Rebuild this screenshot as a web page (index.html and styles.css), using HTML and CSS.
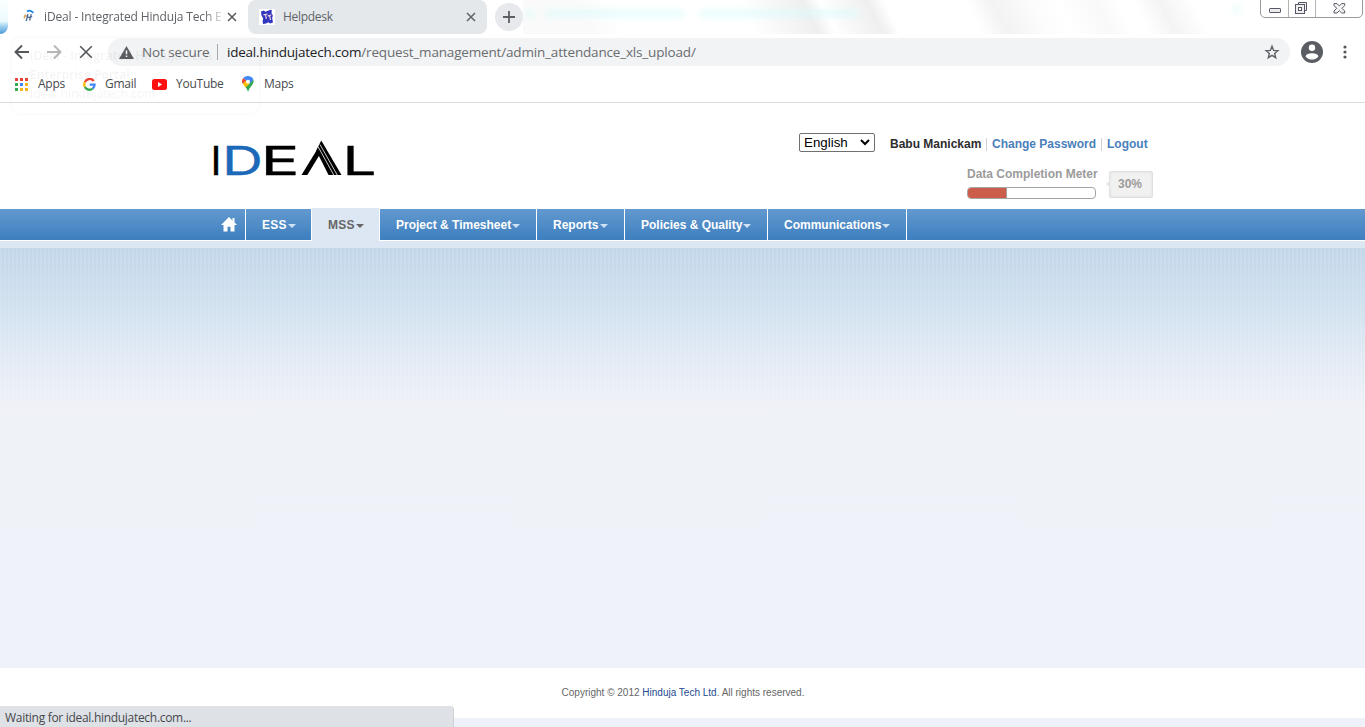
FILE: index.html
```html
<!DOCTYPE html>
<html lang="en">
<head>
<meta charset="utf-8">
<title>iDeal - Integrated Hinduja Tech Enterprise Portal</title>
<link rel="stylesheet" href="styles.css">
</head>
<body>
<div class="browser">
  <div class="tabstrip">
    <div class="desktop-edge"></div>
    <div class="tab active">
      <svg class="fav" width="16" height="16" viewBox="0 0 16 16"><path d="M6 2.500Q9.500.2 12.300 4" fill="none" stroke="#1683e8" stroke-width="1.700"/><path d="M4.600 5.500 3 9.500M2.800 7h3" stroke="#d8a35f" stroke-width="1.300" fill="none"/><path d="M7 5 5.200 12.200M10.300 5.200 8.600 11.500M6.200 8.700l5-1" stroke="#4c6a92" stroke-width="1.300" fill="none"/></svg>
      <span class="tab-title first">iDeal - Integrated Hinduja Tech E</span>
      <svg class="x" width="10" height="10" viewBox="0 0 10 10"><path d="m1 1 8 8M9 1 1 9" stroke="#55595d" stroke-width="1.500"/></svg>
    </div>
    <div class="tab idle">
      <svg class="fav" width="16" height="16" viewBox="0 0 16 16"><path fill="#fff" d="M0 0h16v16H0z"/><path fill="#3235bd" d="m2 2.500 3-1 1.200 1.200L9 1.800l2.500-1 1.300.5-.3 3 1.300 2-.6 3 .8 4.200-3 1-1.600-1.300-2.400 1.300-3 .5L3.600 12l.6-2.500L2.500 6.500z"/><path d="m4.500 5.900 4-.9M6.500 5.500l.9 4.300M8.800 6.800l3.500-.8M10.600 6.500l.9 4.500" stroke="#f2d5dc" stroke-width="1.200"/></svg>
      <span class="tab-title">Helpdesk</span>
      <svg class="x" width="10" height="10" viewBox="0 0 10 10"><path d="m1 1 8 8M9 1 1 9" stroke="#5f6368" stroke-width="1.500"/></svg>
    </div>
    <div class="newtab"><svg width="12" height="12" viewBox="0 0 12 12"><path d="M6 0v12M0 6h12" stroke="#5b5f63" stroke-width="1.800"/></svg></div>
    <div class="glass"><i class="glow g1"></i><i class="glow g2"></i><i class="glow g3"></i><i class="glow g4"></i></div>
    <div class="winbtns">
      <span class="wb w1"><svg width="13" height="6" viewBox="0 0 13 6"><rect x=".5" y=".5" width="11" height="4" rx=".6" fill="#ececec" stroke="#555766"/></svg></span>
      <span class="wb w2"><svg width="13" height="13" viewBox="0 0 13 13"><path d="M3.500 3V.5h8v8H9" fill="#eee" stroke="#555766"/><rect x=".5" y="2.500" width="9" height="9" fill="#eee" stroke="#555766"/><rect x="3.500" y="5.500" width="3" height="3" fill="#fff" stroke="#555766"/></svg></span>
      <span class="wb w3"><svg width="13" height="11" viewBox="0 0 13 11"><path d="M1 .6h3l2.300 2.300L8.700.6h3v2L9 5.300l2.700 2.700v2h-3L6.300 7.700 4 10H1V8l2.700-2.700L1 2.600z" fill="#f3f3f3" stroke="#555766"/></svg></span>
    </div>
  </div>

  <div class="toolbar">
    <svg class="ic back" width="16" height="16" viewBox="0 0 16 16"><path d="M15 8H2M8 1.500 1.500 8 8 14.500" fill="none" stroke="#54585c" stroke-width="1.900"/></svg>
    <svg class="ic fwd" width="16" height="16" viewBox="0 0 16 16"><path d="M1 8h13M8 1.500 14.500 8 8 14.500" fill="none" stroke="#b6b8ba" stroke-width="1.900"/></svg>
    <svg class="ic stop" width="14" height="14" viewBox="0 0 14 14"><path d="m1.200 1.200 11.600 11.600M12.800 1.200 1.200 12.800" stroke="#54585c" stroke-width="1.600"/></svg>
    <div class="omnibox">
      <svg class="warn" width="15" height="13" viewBox="0 0 15 13"><path d="M7.500 0 15 13H0z" fill="#5a5d61"/><path d="M7.500 4.500v3.700M7.500 9.500v1.600" stroke="#fff" stroke-width="1.500"/></svg>
      <span class="notsecure">Not secure</span>
      <span class="bar"></span>
      <span class="url"><b>ideal.hindujatech.com</b>/request_management/admin_attendance_xls_upload/</span>
      <svg class="star" width="16" height="16" viewBox="0 0 16 16"><path d="m8 2.300 1.600 4.100 4.300.3-3.300 2.800 1.100 4.200L8 11.300l-3.700 2.400 1.100-4.200-3.300-2.800 4.300-.3z" fill="none" stroke="#5f6368" stroke-width="1.400"/></svg>
    </div>
    <svg class="user" width="22" height="22" viewBox="0 0 22 22"><circle cx="11" cy="11" r="11" fill="#5a5e63"/><circle cx="11" cy="6.800" r="3.200" fill="#fff"/><path d="M4.600 15.400C5.200 11.100 16.800 11.100 17.400 15.400 14.900 19.500 7.100 19.500 4.600 15.400z" fill="#fff"/></svg>
    <svg class="dots" width="4" height="14" viewBox="0 0 4 14"><g fill="#55595d"><circle cx="2" cy="2" r="1.600"/><circle cx="2" cy="7" r="1.600"/><circle cx="2" cy="12" r="1.600"/></g></svg>
  </div>

  <div class="bookmarks">
    <svg class="bi b-apps" width="13" height="13" viewBox="0 0 13 13"><path fill="#e94335" d="M0 0h3v3H0zM5 0h3v3H5zM10 0h3v3h-3z"/><path fill="#34a853" d="M0 5h3v3H0zM0 10h3v3H0z"/><path fill="#4285f4" d="M5 5h3v3H5z"/><path fill="#f6b51e" d="M10 5h3v3h-3zM5 10h3v3H5zM10 10h3v3h-3z"/></svg>
    <span class="bm m1">Apps</span>
    <svg class="bi" width="13" height="13" viewBox="0 0 13 13" fill="none" stroke-width="2.300"><path stroke="#ea4335" d="M10.800 3A5.200 5.200 0 0 0 1.900 4.100"/><path stroke="#fbbc05" d="M1.900 4.100a5.200 5.200 0 0 0 0 4.900"/><path stroke="#34a853" d="M1.900 9a5.200 5.200 0 0 0 7.800 1.600"/><path stroke="#4285f4" d="M9.700 10.600a5.200 5.200 0 0 0 1.900-4H6.700"/></svg>
    <span class="bm m2">Gmail</span>
    <svg class="bi" width="15" height="11" viewBox="0 0 15 11"><rect width="15" height="11" rx="2.500" fill="#f11"/><path d="m6 3 4 2.500L6 8z" fill="#fff"/></svg>
    <span class="bm m3">YouTube</span>
    <svg class="bi" width="12" height="16" viewBox="0 0 12 16"><path fill="#34a853" d="M11.300 3.500C13 8 8 10 6 16 5.500 13.500 4 11.500 2.500 9.700z"/><path fill="#fbbc04" d="M.7 7.800 4 4l4 3.600-4.500 4z"/><path fill="#ea4335" d="M1.300 2.100 4.200 4.600.6 7.800C-.3 6-.1 3.600 1.300 2.100z"/><path fill="#4285f4" d="M1.300 2.100C3.500-.7 9.300-.8 11.300 3.500L7.800 7.700 4.200 4.600z"/><circle cx="6" cy="5.700" r="2" fill="#fff"/></svg>
    <span class="bm m4">Maps</span>
  </div>
  <div class="hovercard"><p>iDeal - Integrated Hinduja Tech</p><p>Enterprise Portal</p><p class="host">ideal.hindujatech.com</p></div>
</div>

<header class="header">
  <svg class="logo" width="170" height="50" viewBox="0 0 170 50">
    <g font-family="Inter, sans-serif" font-size="39.500">
      <text x="0.500" y="37" textLength="11" lengthAdjust="spacingAndGlyphs" stroke="#000" stroke-width=".3">I</text>
      <text x="12" y="37" textLength="41" lengthAdjust="spacingAndGlyphs" fill="#1b69b8" stroke="#1b69b8" stroke-width=".3">D</text>
      <text x="50.500" y="37" textLength="39" lengthAdjust="spacingAndGlyphs" stroke="#000" stroke-width=".3">E</text>
      <text x="132.500" y="37" textLength="34" lengthAdjust="spacingAndGlyphs" stroke="#000" stroke-width=".3">L</text>
    </g>
    <path d="M91.500 37 106.500 12.500l3.300 4L97.300 37z"/>
    <path d="M106.200 12.500 111.300 2.500 131.500 37H118.500z"/>
    <path d="m108 8.500 16 29M110 6.500l17.500 31" fill="none" stroke="#fff" stroke-width=".8"/>
  </svg>
  <div class="account">
    <div class="userline">
      <span class="select">English<svg width="10" height="7" viewBox="0 0 10 7"><path d="m1 1 4 4 4-4" fill="none" stroke="#000" stroke-width="2"/></svg></span>
      <strong class="name">Babu Manickam</strong><a class="cp">Change Password</a><a class="lo">Logout</a>
    </div>
    <div class="meter">
      <div class="meter-main"><span class="meter-label">Data Completion Meter</span><div class="track"><div class="fill"></div></div></div>
      <div class="pct">30%</div>
    </div>
  </div>
</header>

<nav class="nav">
  <a class="home"><svg width="16" height="15" viewBox="0 0 16 15"><path fill="#fff" d="M8 0 0 8h2.500v6.500h4V9.700h3v4.800h4V8H16l-2.500-2.700V1h-2v2.400z"/></svg></a>
  <a class="item n1">ESS<i></i></a>
  <a class="item n2 current">MSS<i></i></a>
  <a class="item n3">Project &amp; Timesheet<i></i></a>
  <a class="item n4">Reports<i></i></a>
  <a class="item n5">Policies &amp; Quality<i></i></a>
  <a class="item n6">Communications<i></i></a>
</nav>
<main class="content"></main>
<footer class="footer">Copyright © 2012&nbsp;<a>Hinduja Tech Ltd</a>. All rights reserved.</footer>
<div class="status">Waiting for ideal.hindujatech.com...</div>
</body>
</html>
```
FILE: styles.css
```css
* { box-sizing: border-box; }
body { margin: 0; width: 1365px; height: 727px; overflow: hidden; position: relative; background: #eef1f9; font-family: "Liberation Sans", Arial, sans-serif; }
svg { display: block; flex: none; }

/* browser chrome */
.browser { position: relative; height: 103px; background: #fff; border-bottom: 1px solid #d9dbdd; font-family: "Open Sans", "Noto Sans", sans-serif; }
.tabstrip { display: flex; height: 34px; position: relative; }
.desktop-edge { width: 8px; height: 34px; border-radius: 0 0 9px 0; background: linear-gradient(#fafeff 0, #edfbfe 62%, #a6d4f0 76%, #4b9bd8 100%); }
.tab { width: 240px; height: 34px; display: flex; align-items: center; color: #5f6368; font-size: 12px; }
.tab.active { background: #fff; padding-left: 13px; border-radius: 8px 8px 0 0; }
.tab.idle { width: 239px; background: #e4e8eb; border-radius: 8px; padding-left: 11px; }
.tab-title { margin-left: 8px; width: 178px; line-height: 34px; height: 34px; white-space: nowrap; letter-spacing: -.15px; }
.tab.active .tab-title { margin-left: 7px; -webkit-mask-image: linear-gradient(90deg, #000 90%, transparent 102%); }
.tab.idle .tab-title { letter-spacing: -.3px; }
.tab .x { margin-left: 5px; }
.newtab { width: 28px; height: 28px; margin: 3px 0 0 8px; border-radius: 50%; background: #e7e9ec; display: flex; align-items: center; justify-content: center; }
.glass { flex: 1; height: 34px; position: relative; overflow: hidden; background:
  linear-gradient(63deg, transparent 27%, #f9f9f9 30%, #efefef 34.5%, #fff0 36.5%, #fafafa 38%, #efefef 42%, #fff0 44%, #fff0 53.5%, #f3f3f3 56.5%, #fcfcfc 61%, #fff0 64%, #f9f9f9 68.5%, #fff0 71%, #fff0 73%, #f4f4f4 76%, #fff0 80%), linear-gradient(63deg, #fafafa 8%, #fff 12%); }
.glow { position: absolute; height: 7px; top: 10px; border-radius: 4px; background: #d9fbfa; opacity: .65; filter: blur(3px); }
.g1 { left: 2px; width: 10px; }
.g2 { left: 22px; width: 140px; }
.g3 { left: 176px; width: 160px; }
.g4 { left: 710px; width: 8px; top: 6px; }
.winbtns { position: absolute; left: 1260px; top: -1px; display: flex; height: 19px; width: 103px; border: 1px solid #9a9a9a; border-radius: 0 0 5px 5px; background: #fff; }
.wb { display: flex; justify-content: center; align-items: center; border-right: 1px solid #b3b3b3; }
.w1 { width: 28px; padding: 4px 0 0 1px; }
.w2 { width: 27px; padding: 0 2px 1px 0; }
.w3 { flex: 1; border: 0; padding-bottom: 1px; }
.toolbar { display: flex; align-items: center; height: 36px; }
.back { margin-left: 14px; }
.fwd { margin-left: 16px; }
.stop { margin-left: 17px; }
.omnibox { margin-left: 15px; width: 1182px; height: 28px; border-radius: 14px; background: #f1f3f4; display: flex; align-items: center; font-size: 13.500px; color: #6a6d71; }
.warn { margin-left: 11px; }
.notsecure { margin-left: 8px; width: 68px; white-space: nowrap; font-size: 13.500px; letter-spacing: -.09px; }
.bar { width: 1px; height: 16px; background: #a8abae; margin-left: 7px; }
.url { margin-left: 9px; width: 1037px; white-space: nowrap; letter-spacing: -.17px; }
.url b { font-weight: 400; color: #202124; letter-spacing: -.22px; }
.user { margin-left: 11px; }
.dots { margin-left: 20px; }
.bookmarks { display: flex; align-items: center; height: 28px; font-size: 12px; color: #474a4e; }
.b-apps { margin-left: 15px; }
.bm { margin-left: 10px; white-space: nowrap; line-height: 28px; height: 28px; letter-spacing: -.25px; }
.m1 { width: 45px; }
.m2 { width: 47px; margin-left: 9px; }
.m3 { width: 66px; margin-left: 9px; }
.hovercard { position: absolute; left: 12px; top: 38px; width: 247px; height: 75px; border-radius: 8px; padding: 8px 18px; font-size: 12px; font-weight: 600; color: #000; opacity: .045; box-shadow: 0 0 4px #000; z-index: 3; }
.hovercard p { margin: 0; line-height: 19px; white-space: nowrap; letter-spacing: .1px; }
.hovercard .host { font-weight: 400; }

/* page header */
.header { height: 106px; background: #fff; display: flex; }
.logo { margin: 35px 0 0 210px; }
.account { margin-left: 419px; padding-top: 30px; width: 360px; }
.userline { display: flex; align-items: center; height: 20px; font-size: 12px; }
.select { width: 76px; height: 19px; margin-top: -1px; border: 1px solid #707070; border-radius: 2px; font-size: 13.333px; display: flex; align-items: center; justify-content: space-between; padding: 0 4px; color: #000; background: #fff; letter-spacing: 0; }
.name { margin-left: 15px; width: 96px; color: #2d2d2d; white-space: nowrap; }
.userline a { font-weight: 700; color: #4a80bb; border-left: 1px solid #d0d0d0; padding-left: 5px; line-height: 13px; white-space: nowrap; }
.cp { width: 115px; }
.name, .userline a { margin-top: 2px; }
.meter { display: flex; margin: 14px 0 0 168px; height: 38px; }
.meter-main { width: 142px; }
.meter-label { display: block; color: #9b9b9b; font-weight: 700; font-size: 12px; line-height: 14px; white-space: nowrap; }
.track { margin-top: 6px; width: 129px; height: 12px; border: 1px solid #a4a4a4; border-radius: 4px; overflow: hidden; background: #fff; }
.fill { width: 39px; height: 10px; background: #cc5d4b; border-right: 1px solid #a7a09e; }
.pct { position: relative; width: 44px; height: 27px; margin-top: 4px; border: 1px solid #e0e0e0; border-radius: 2px; background: #f1f1f1; color: #9b9b9b; font-weight: 700; font-size: 12px; line-height: 25px; text-align: center; padding-right: 2px; box-shadow: inset 0 0 3px #ddd; }
.pct::before { content: ""; position: absolute; left: -4px; top: 8px; border: 4px solid transparent; border-right-color: #e7e7e7; border-left: 0; }

/* navigation */
.nav { height: 32px; display: flex; background: linear-gradient(#6299cf, #3e7fbf); border-bottom: 1px solid #fff; padding-left: 205px; }
.home { width: 41px; border-right: 1px solid #fff; padding: 8px 0 0 16px; }
.item { display: block; position: relative; height: 31px; border-right: 1px solid #fff; padding-left: 16px; line-height: 32px; font-size: 12px; font-weight: 700; color: #fff; white-space: nowrap; }
.item i { display: inline-block; border: 4px solid transparent; border-top-color: #d0e3f4; border-bottom: 0; margin-left: 1px; vertical-align: 1px; }
.n1 { width: 66px; letter-spacing: .3px; }
.n2 { width: 68px; letter-spacing: .3px; }
.n3 { width: 157px; }
.n4 { width: 88px; }
.n4 i { margin-left: 2px; }
.n5 { width: 143px; }
.n6 { width: 139px; }
.item.current { background: #dde7f3; color: #666; height: 33px; margin-top: -1px; line-height: 34px; border-right: 1px solid #fff; }
.item.current i { border-top-color: #666; }
.content { height: 427px; border-top: 7px solid #dde7f3; background:
  repeating-linear-gradient(90deg, #ffffff1a 0 2px, transparent 2px 4px),
  linear-gradient(#c2d6ea 0, #d1e1ef 60px, #e2eaf5 110px, #eef1f7 155px, #eef1f9 100%); }
.footer { height: 50px; background: #fff; text-align: center; font-size: 10px; line-height: 50px; color: #666; padding-left: 1px; }
.footer a { color: #1c4b91; }
.status { position: absolute; left: 0; bottom: 0; width: 454px; height: 21px; background: #dee1e6; border-radius: 0 4px 0 0; border-right: 1px solid #cfd2d6; padding-left: 5px; font: 12px/23px "Open Sans", sans-serif; letter-spacing: -.3px; color: #45484c; }
```
